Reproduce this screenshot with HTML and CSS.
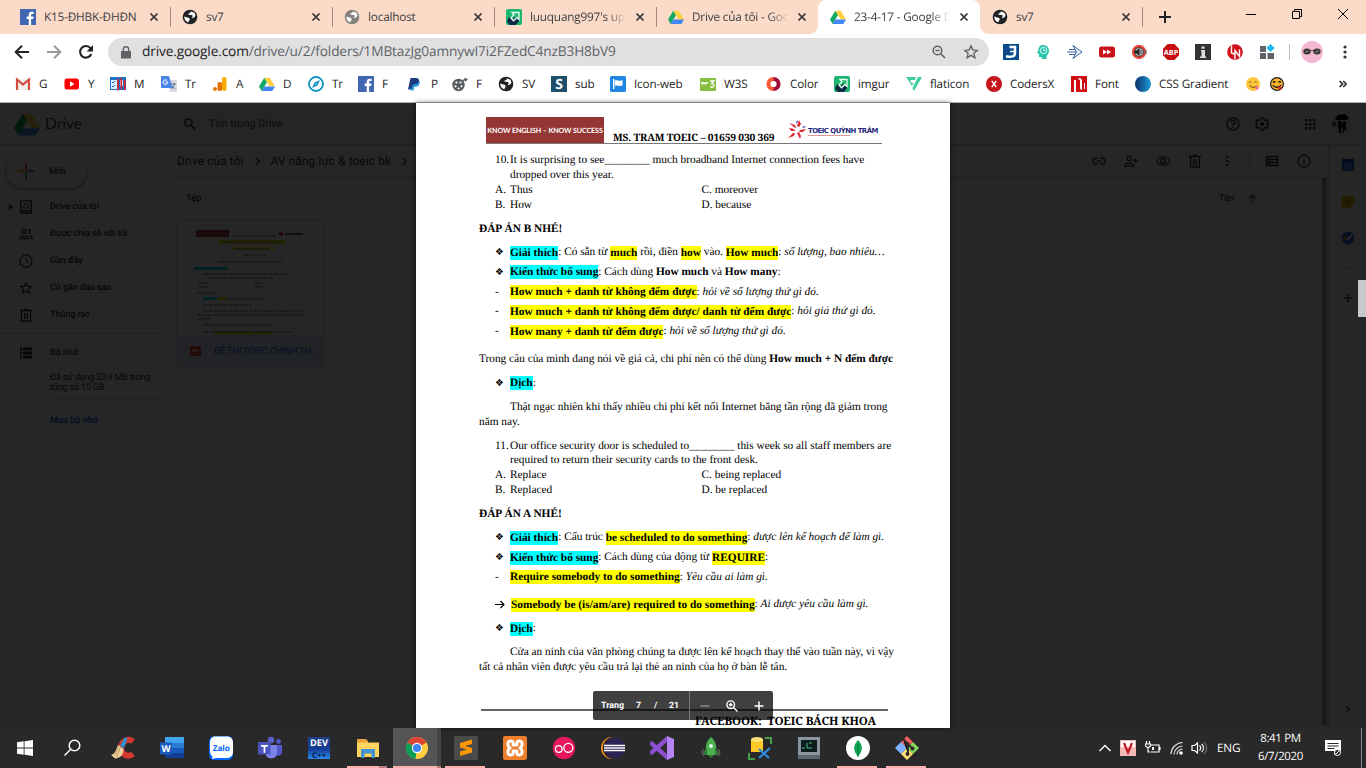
FILE: index.html
```html
<!DOCTYPE html>
<html lang="vi">
<head>
<meta charset="utf-8">
<title>23-4-17 - Google Drive</title>
<link rel="stylesheet" href="styles.css">
</head>
<body>
<svg class="defs" aria-hidden="true">
  <defs>
    <linearGradient id="gBlue"><stop offset="0" stop-color="#0b2f6b"/><stop offset="1" stop-color="#1d9fd8"/></linearGradient>
    <linearGradient id="gRing"><stop offset="0.45" stop-color="#ff5a36"/><stop offset="0.55" stop-color="#a3103c"/></linearGradient>
    <linearGradient id="gDev" x2="0" y2="1"><stop offset="0" stop-color="#1f3f86"/><stop offset="0.55" stop-color="#143c96"/><stop offset="1" stop-color="#2b8cf0"/></linearGradient>
  </defs>
  <symbol id="fb" viewBox="0 0 16 16"><path fill="#4267b2" d="M0 0h16v16H0z"/><path fill="#fff" d="M8.700 16V10H6.700V7.600h2V5.800c0-2 1.200-3.100 3-3.100h1.900v2.200h-1.300c-.9 0-1.200.5-1.200 1.200v1.500h2.400l-.3 2.400h-2.100v6z"/></symbol>
  <symbol id="globe" viewBox="0 0 16 16"><circle cx="8" cy="8" r="7.300" fill="currentColor"/><path fill="#fff" d="M8.500 2.300c1 .8-.4 1.800-1.600 2.100-1 .3-.7 1.300.2 1.400l2.600.1c1.300.2 1.300 1.700.4 2.200-.8.500.2 1.200 1 .7l1.400-.5 1-1.800-1-2.700zM2.200 7.500l3.200 1c1.200.3 2.300.7 2.300 1.700 0 1.200-1.200 1.200-1.200 2.300 0 .7.300 1.100.3 1.100-2.600-.7-4.600-3-4.600-6.100z"/></symbol>
  <symbol id="drive" viewBox="0 0 16 16"><path fill="#11a861" d="M5.300 1.700 0 10.600l2.700 4.400L8 6z"/><path fill="#ffcf3f" d="M5.300 1.700h5.400l5.300 8.900h-5.300z"/><path fill="#4285f4" d="M5.300 10.600H16L13.300 15H2.700z"/></symbol>
  <symbol id="imgur" viewBox="0 0 16 16"><rect width="16" height="16" rx="2" fill="#1bb76e"/><path fill="#0c2b43" d="M2 9.500 3.800 8l2.500 2.500L9 8l4 .5.500 3L10 16H4L1 13z"/><path fill="none" stroke="#e9fff3" stroke-width="1.300" d="M6 3.500h7v7l-2.200-2-3.200 3.200-2.700-2.800 3.100-3.200z"/></symbol>
  <symbol id="close" viewBox="0 0 10 10"><path fill="none" stroke="#303030" stroke-width="1.700" d="m1.500 1.500 7 7m0-7-7 7"/></symbol>
  <symbol id="trash" viewBox="0 0 14 14"><path fill="none" stroke="currentColor" stroke-width="1.300" d="M2.500 3v10h9V3M1 2.500h12M5 1.500h4M5.700 5v6M8.300 5v6"/></symbol>
  <symbol id="star" viewBox="0 0 16 16"><path fill="none" stroke="currentColor" stroke-width="1.400" d="m8 1.900 1.800 4 4.400.5-3.300 2.900 1 4.400L8 11.400l-3.900 2.300 1-4.400-3.300-2.900 4.400-.5z"/></symbol>
  <symbol id="chev" viewBox="0 0 8 10"><path fill="none" stroke="currentColor" stroke-width="1.400" d="m2 1 4 4-4 4"/></symbol>
</svg>

<header class="tabs">
  <div class="tab"><svg class="i16"><use href="#fb"/></svg><span class="tab-t">K15-ĐHBK-ĐHĐN</span><svg class="x"><use href="#close"/></svg></div>
  <div class="tab sep"><svg class="i16 dark"><use href="#globe"/></svg><span class="tab-t">sv7</span><svg class="x"><use href="#close"/></svg></div>
  <div class="tab sep"><svg class="i16 grey"><use href="#globe"/></svg><span class="tab-t">localhost</span><svg class="x"><use href="#close"/></svg></div>
  <div class="tab sep"><svg class="i16"><use href="#imgur"/></svg><span class="tab-t fade">luuquang997's uploads</span><svg class="x"><use href="#close"/></svg></div>
  <div class="tab sep"><svg class="i16"><use href="#drive"/></svg><span class="tab-t fade">Drive của tôi - Google</span><svg class="x"><use href="#close"/></svg></div>
  <div class="tab active"><svg class="i16"><use href="#drive"/></svg><span class="tab-t fade">23-4-17 - Google Drive</span><svg class="x"><use href="#close"/></svg></div>
  <div class="tab"><svg class="i16 dark"><use href="#globe"/></svg><span class="tab-t">sv7</span><svg class="x"><use href="#close"/></svg></div>
  <div class="newtab sep"><svg width="14" height="14" viewBox="0 0 14 14"><path stroke="#222" stroke-width="2" d="M7 1v12M1 7h12"/></svg></div>
  <div class="win">
    <svg width="12" height="12" viewBox="0 0 12 12"><path stroke="#000" d="M1 6.500h10"/></svg>
    <svg width="12" height="12" viewBox="0 0 12 12"><path fill="none" stroke="#000" d="M1.500 3.500h7v7h-7zM3.500 3V1.500h7v7H9"/></svg>
    <svg width="12" height="12" viewBox="0 0 12 12"><path stroke="#000" d="m1 1 10 10m0-10L1 11"/></svg>
  </div>
</header>

<div class="toolbar">
  <svg class="nav" viewBox="0 0 16 16"><path fill="none" stroke="#222" stroke-width="2" d="M15 8H2m6-6.300L1.700 8 8 14.300"/></svg>
  <svg class="nav" viewBox="0 0 16 16"><path fill="none" stroke="#9a9a9a" stroke-width="2" d="M1 8h13M8 1.700 14.300 8 8 14.300"/></svg>
  <svg class="nav" viewBox="0 0 16 16"><path fill="none" stroke="#222" stroke-width="2.100" d="M13.300 10A5.800 5.800 0 1 1 12.500 4.300"/><path fill="#222" d="M15 1v6.400H8.600z"/></svg>
  <div class="omni">
    <svg class="lock" width="10" height="13" viewBox="0 0 10 13"><path fill="#5f6368" d="M0 5h10v7.500H0z"/><path fill="none" stroke="#5f6368" stroke-width="1.400" d="M2.300 5V3.500a2.700 2.700 0 0 1 5.400 0V5"/></svg>
    <span class="url"><b>drive.google.com</b>/drive/u/2/folders/1MBtazJg0amnywI7i2FZedC4nzB3H8bV9</span>
    <svg class="i16" viewBox="0 0 16 16"><path fill="none" stroke="#5f6368" stroke-width="1.500" d="M10.800 6.500a4.300 4.300 0 1 1-8.600 0 4.300 4.300 0 0 1 8.600 0zM9.600 9.600l4.400 4.400M4.500 6.500h4"/></svg>
    <svg class="i16 gs"><use href="#star"/></svg>
  </div>
  <div class="exts">
    <svg class="i16" viewBox="0 0 16 16"><path fill="#0b4a8b" d="M0 0h16v16H0z"/><path fill="none" stroke="#fff" stroke-width="2.500" d="M6.500 3H12v6c0 3.500-3.500 4.500-9 3.200"/><path stroke="#fff" stroke-width="1.600" d="M7 7.500h5"/></svg>
    <svg class="i16" viewBox="0 0 16 16"><path fill="#2cc4ad" d="M8 1c4 0 6 3 6 5.800 0 3-1.700 4.200-2.400 5.200V15h-5v-2H4v-3L2 9l1.300-2.500C3.300 3 5.500 1 8 1z"/><circle cx="8.500" cy="6.500" r="3.200" fill="none" stroke="#d5fff6"/><path fill="none" stroke="#d5fff6" d="M8.500 4.700v2h1.700"/></svg>
    <svg class="i16" viewBox="0 0 16 16"><path fill="#eef5ff" stroke="#3a5f9b" d="M6 1.500 15 8l-9 6.500L9.500 8z"/><path stroke="#3a5f9b" d="M2 5.500h6M0 8h9M2 10.500h6"/></svg>
    <svg class="i16" viewBox="0 0 16 16"><rect y="2.500" width="16" height="11" rx="2.500" fill="#c9141b"/><path fill="#fff" d="m4 5.500 4 2.500-4 2.500zM8 5.500l4 2.500-4 2.500z"/></svg>
    <svg class="i16" viewBox="0 0 16 16"><circle cx="8" cy="8" r="6" fill="#333" stroke="#e6453c" stroke-width="2.300"/><circle cx="8" cy="8" r="4" fill="#aaa"/><path fill="#222" d="M4 6.500h2L8.500 4v8L6 9.500H4z"/><path stroke="#555" d="M10 6v4M12 7h4M12 9h4"/></svg>
    <svg class="i16" viewBox="0 0 16 16"><path fill="#c70d10" d="M4.700 0h6.600L16 4.700v6.600L11.300 16H4.700L0 11.300V4.700z"/><text x="8" y="10.800" font-size="7.200" font-weight="700" text-anchor="middle" fill="#fff">ABP</text></svg>
    <svg class="i16" viewBox="0 0 16 16"><path fill="#333" d="M0 0h16v16H0z"/><path fill="#ddd" d="M6.500 2.500h3v2.300h-3zM6 6h4v6.500h1V14H5v-1.500h1.500V7.500H6z"/></svg>
    <svg class="i16" viewBox="0 0 16 16"><circle cx="8" cy="8" r="7.800" fill="#d1121b"/><path fill="none" stroke="#fff" stroke-width="1.400" d="M4.500 1.500v7.500l4 1.500M8 15V6.500l4.500 6V5.500"/></svg>
    <svg class="i16" viewBox="0 0 16 16"><path fill="#5f6368" d="M1 2h6v6H1zM1 9h6v6H1zM8.500 9H15v6H8.500z"/><path fill="#16b7f3" d="m11.500 0 4 4-4 4-4-4z"/></svg>
  </div>
  <i class="tsep"></i>
  <svg class="avatar" viewBox="0 0 22 22"><circle cx="11" cy="11" r="11" fill="#f6b8d0"/><ellipse cx="6" cy="10.500" rx="3.700" ry="3" fill="#3a3a3a"/><ellipse cx="16" cy="10.500" rx="3.700" ry="3" fill="#3a3a3a"/><path stroke="#ccc" d="m5 11.500 2-2m8 2 2-2"/><path stroke="#555" d="M9 9.500h4"/></svg>
  <svg class="menu" width="4" height="14" viewBox="0 0 4 14"><circle cx="2" cy="2" r="1.600" fill="#333"/><circle cx="2" cy="7" r="1.600" fill="#333"/><circle cx="2" cy="12" r="1.600" fill="#333"/></svg>
</div>

<nav class="marks">
  <a><svg class="i16" viewBox="0 0 16 16"><path fill="#f1f1f1" d="M1 3h14v11H1z"/><path fill="none" stroke="#d54b3d" stroke-width="2.200" d="M2 14V3.500l6 5 6-5V14"/></svg>G</a>
  <a><svg class="i16" viewBox="0 0 16 16"><rect y="2.500" x=".5" width="14.500" height="11" rx="2.500" fill="#f00"/><path fill="#fff" d="m6 5.300 4.500 2.700L6 10.700z"/></svg>Y</a>
  <a><svg class="i16" viewBox="0 0 16 16"><path fill="#1c72c4" d="M0 1h16v13H0z"/><path fill="#dcefff" d="M1 4h6v9H1z"/><path fill="none" stroke="#1c72c4" d="m2 6 1 1 2-2m-3 5 1 1 2-2"/><path fill="#cfe4f7" d="M10 4h3v6h-3z"/><path fill="none" stroke="#ec1c24" stroke-width="1.500" d="M8 14.500V2.500M11.300 13V2M14.800 14V4"/></svg>M</a>
  <a><svg class="i16" viewBox="0 0 16 16"><path fill="#d7d9dc" d="M6 4h10v12H9z"/><path fill="#4a86e8" d="M0 0h8l3.500 12H0z"/><path fill="none" stroke="#fff" d="M6 4.500A2.300 2.300 0 1 0 6.700 6H4.500"/><path fill="none" stroke="#5f7c99" d="M10 8h5m-2.500-1v1m-2 5 3.500-5m-3 2 3 3"/></svg>Tr</a>
  <a><svg class="i16" viewBox="0 0 16 16"><rect x="10" y="1" width="4.500" height="14" rx="2" fill="#f9ab00"/><rect x="5.500" y="6" width="4.500" height="9" rx="2" fill="#e37400"/><circle cx="3" cy="13" r="2" fill="#e37400"/></svg>A</a>
  <a><svg class="i16"><use href="#drive"/></svg>D</a>
  <a><svg class="i16" viewBox="0 0 16 16"><circle cx="8" cy="8" r="7" fill="#fff" stroke="#1593c6" stroke-width="1.800"/><path fill="#1593c6" d="m12 4-2.500 5.500L4 12l2.500-5.500zM7.500 7.300l-.2 1.500 1.500-.3z"/></svg>Tr</a>
  <a><svg class="i16"><use href="#fb"/></svg>F</a>
  <a><svg class="i16" viewBox="0 0 16 16"><path fill="#1d3c82" d="M3.500 2h5.700c2 0 3.300 1.500 2.800 3.500-.5 2.500-2 3.500-4.200 3.500H6L5 13.500H1z"/><path fill="#1f9bdc" d="M12.200 5c1.500 1.200.3 5.800-3.600 5.800H7.200L6.500 14.500H4l1-4 1.500-2C10 8.500 11.800 7.300 12.200 5z"/></svg>P</a>
  <a><svg class="i16" viewBox="0 0 16 16"><circle cx="6.500" cy="9" r="6.200" fill="#575a60"/><g fill="#fff"><circle cx="4.500" cy="6.500" r="1.100"/><circle cx="8.500" cy="6.500" r="1.100"/><circle cx="3.500" cy="10.300" r="1.100"/><circle cx="9.500" cy="10.300" r="1.100"/><circle cx="6.500" cy="12.500" r="1"/></g><path stroke="#575a60" stroke-width="1.500" d="m11 5 3-3m-1 3 2.500-2"/></svg>F</a>
  <a><svg class="i16 dark"><use href="#globe"/></svg>SV</a>
  <a><svg class="i16" viewBox="0 0 16 16"><path fill="#1d4f68" d="M0 0h16v16H0z"/><text class="serif" x="8" y="13" font-size="14" font-weight="700" text-anchor="middle" fill="#fff">S</text></svg>sub</a>
  <a><svg class="i16" viewBox="0 0 16 16"><rect width="16" height="16" rx="1.500" fill="#2286e4"/><path fill="#fff" d="M3 3h1.500v10H3zM5 4.500c2-1 3.500 1 7.500-.2V9.500c-3.500 1.200-5-.8-7.500.2z"/></svg>Icon-web</a>
  <a><svg class="i16" viewBox="0 0 16 16"><path fill="#86bf3e" d="M0 2h16v13H0z"/><path fill="none" stroke="#fff" stroke-width="1.300" d="m1 6 1.500 2L4 6.500 5.500 8 7 6.500 8 7M10 5h4l-2.300 2.500c3 0 2.800 4-.2 3.800l-1.500-.8"/></svg>W3S</a>
  <a><svg class="i16" viewBox="0 0 16 16"><circle cx="7.500" cy="8" r="5.100" fill="none" stroke="url(#gRing)" stroke-width="4"/></svg>Color</a>
  <a><svg class="i16"><use href="#imgur"/></svg>imgur</a>
  <a><svg class="i16" viewBox="0 0 16 16"><path fill="#3ed09a" d="M0 1h10l-1 3H4l1.500 3h2L6 10zM12 1h4L8 15l-1.500-3z"/></svg>flaticon</a>
  <a><svg class="i16" viewBox="0 0 16 16"><circle cx="8" cy="8" r="8" fill="#c4161c"/><path stroke="#fff" stroke-width="1.500" d="m5.800 4.800 4.400 6.400m0-6.400-4.400 6.400"/></svg>CodersX</a>
  <a><svg class="i16" viewBox="0 0 16 16"><path fill="#d10d12" d="M0 0h16v16H0z"/><path fill="#fff" d="M3 4h2v12H3zM7.500 2C10 2 11 3 11 5v9c-1.500 0-2-1-2-3V5c0-1-.5-1.500-1.500-1.500zM13 7h1v6h-1z"/></svg>Font</a>
  <a><svg class="i16" viewBox="0 0 16 16"><circle cx="8" cy="8" r="8" fill="url(#gBlue)"/></svg>CSS Gradient</a>
  <a><svg class="i16" viewBox="0 0 16 16"><circle cx="7" cy="8" r="7" fill="#ffc93b"/><path fill="none" stroke="#6b4710" d="M3 6.500c.5-1 1.800-1 2.300 0M8.500 6.500c.5-1 1.800-1 2.300 0M3.500 9c1.500 3 5.500 3 7.500.5"/><path fill="#f26d9c" d="M9 11c1-2 4-1 3.500 1.500S9 13.500 9 11z"/></svg></a>
  <a><svg class="i16" viewBox="0 0 16 16"><circle cx="7" cy="8" r="6.400" fill="#ffb52b" stroke="#222" stroke-width="1.200"/><path fill="none" stroke="#111" stroke-width="1.300" d="M3 6.500c.5-1 1.800-1 2.300 0M8.500 6.500c.5-1 1.800-1 2.300 0M3 9c1.500 3 6 3 8 0"/><path fill="#e62d2d" d="M8 11.500c1-2 4-1 3.500 1S8 14 8 11.500z"/></svg></a>
  <a class="more"><svg width="8" height="8" viewBox="0 0 8 8"><path fill="none" stroke="#222" stroke-width="1.600" d="m.6 1 3 3-3 3M4.200 1l3 3-3 3"/></svg></a>
</nav>

<main class="stage">
  <div class="drive">
    <div class="d-head">
      <svg class="d-logo"><use href="#drive"/></svg><span class="d-name">Drive</span>
      <div class="search"><svg width="12" height="12" viewBox="0 0 12 12"><path fill="none" stroke="#333" stroke-width="1.500" d="M8 4.500a3.600 3.600 0 1 1-7.200 0 3.600 3.600 0 0 1 7.200 0zM7 7l4.300 4.300"/></svg><span>Tìm trong Drive</span></div>
      <div class="d-icons">
        <svg class="i14" viewBox="0 0 14 14"><circle cx="7" cy="7" r="6" fill="none" stroke="#333" stroke-width="1.300"/><path fill="none" stroke="#333" stroke-width="1.300" d="M5 5.500c0-3 4-2.500 4-.3C9 6.500 7 6.700 7 8.300M7 9.500v1.300"/></svg>
        <svg class="i14" viewBox="0 0 14 14"><path fill="none" stroke="#333" stroke-width="1.400" d="M5.500 1h3l.4 1.700 1.300.7 1.700-.5 1.300 2.400L12 6.500v1l1.200 1.200-1.300 2.400-1.700-.5-1.300.7L8.500 13h-3l-.4-1.700-1.300-.7-1.700.5L.8 8.700 2 7.500v-1L.8 5.300l1.300-2.400 1.700.5 1.300-.7z"/><circle cx="7" cy="7" r="2" fill="#222"/></svg>
        <svg class="i14" viewBox="0 0 14 14"><path fill="#333" d="M2 2h2.500v2.500H2zM6 2h2.500v2.500H6zM10 2h2.500v2.500H10zM2 6h2.500v2.500H2zM6 6h2.500v2.500H6zM10 6h2.500v2.500H10zM2 10h2.500v2.500H2zM6 10h2.500v2.500H6zM10 10h2.500v2.500H10z"/></svg>
        <svg class="d-av" viewBox="0 0 20 20"><circle cx="10" cy="10" r="10" fill="#e4e4e4"/><path fill="#000" d="m3 5 3-4 7-1 4 4-3 2H5zM6 7h3l1 3 2-3 2 1v8h-2v3h-1v-7l-2 4v3H7v-3L6 12z"/><path fill="#3b6b5a" d="M0 8h4v4H0z"/></svg>
      </div>
    </div>
    <aside class="side">
      <div class="new"><svg width="16" height="16" viewBox="0 0 16 16"><path fill="#ea4335" d="M7 0h2v7H7z"/><path fill="#fbbc04" d="M0 7h7v2H0z"/><path fill="#34a853" d="M7 9h2v7H7z"/><path fill="#4285f4" d="M9 7h7v2H9z"/></svg>Mới</div>
      <div class="it first"><svg class="i14" viewBox="0 0 14 14"><path fill="none" stroke="#444" stroke-width="1.500" d="M1.700 1h10.600v12H1.700zM1.700 11h10.600"/><path fill="none" stroke="#444" d="M6 3.500h2L10 8H4z"/></svg>Drive của tôi</div>
      <div class="it"><svg class="i14" viewBox="0 0 14 14"><path fill="none" stroke="#444" stroke-width="1.400" d="M7 4.500a2 2 0 1 1-4 0 2 2 0 0 1 4 0zM1 11.500c0-3.500 8.500-3.500 8.500 0zM9 2.500a2 2 0 0 1 0 4M10.500 8.500c2 .5 2.700 1.500 2.700 3H11"/></svg>Được chia sẻ với tôi</div>
      <div class="it"><svg class="i14" viewBox="0 0 14 14"><circle cx="7" cy="7" r="6" fill="none" stroke="#444" stroke-width="1.400"/><path fill="none" stroke="#444" stroke-width="1.200" d="M7 3.500V7l2.500 1.800"/></svg>Gần đây</div>
      <div class="it"><svg class="i14"><use href="#star"/></svg>Có gắn dấu sao</div>
      <div class="it"><svg class="i14"><use href="#trash"/></svg>Thùng rác</div>
      <div class="it mem"><svg class="i14" viewBox="0 0 14 14"><path fill="#333" d="M1 1.500h2v3H1zM4 1.500h9v3H4zM1 5.500h2v3H1zM4 5.500h9v3H4zM1 9.500h2v3H1zM4 9.500h9v3H4z"/></svg>Bộ nhớ</div>
      <p class="used">Đã sử dụng 23,9 MB trong<br>tổng số 15 GB</p>
      <p class="buy">Mua bộ nhớ</p>
    </aside>
    <section class="files">
      <div class="crumbs"><span>Drive của tôi</span><svg class="cv"><use href="#chev"/></svg><span>AV năng lực &amp; toeic bk</span><svg class="cv"><use href="#chev"/></svg>
        <div class="acts">
          <svg class="i14" viewBox="0 0 14 14"><path fill="none" stroke="#444" stroke-width="1.400" d="M6 4H4a3 3 0 0 0 0 6h2M8 4h2a3 3 0 0 1 0 6H8M4.500 7h5"/></svg>
          <svg class="i14" viewBox="0 0 14 14"><path fill="none" stroke="#444" stroke-width="1.400" d="M7.500 4.500a2.200 2.200 0 1 1-4.400 0 2.200 2.200 0 0 1 4.400 0zM.8 12c0-4 9-4 9 0zM11.500 4v5M9 6.500h5"/></svg>
          <svg class="i14" viewBox="0 0 14 14"><path fill="none" stroke="#444" stroke-width="1.400" d="M.5 7C3 1.500 11 1.500 13.500 7 11 12.500 3 12.500.5 7z"/><circle cx="7" cy="7" r="2.200" fill="none" stroke="#444" stroke-width="1.400"/></svg>
          <svg class="i14"><use href="#trash"/></svg>
          <svg class="i14" viewBox="0 0 14 14"><path fill="#444" d="M6 2h2.300v2H6zM6 6h2.300v2H6zM6 10h2.300v2H6z"/></svg>
          <i class="asep"></i>
          <svg class="i14" viewBox="0 0 14 14"><path fill="none" stroke="#333" stroke-width="1.400" d="M1.500 2.500h11v9h-11zM4.500 2.500v9M1.500 5.500h11M1.500 8.500h11"/></svg>
          <svg class="i14" viewBox="0 0 14 14"><circle cx="7" cy="7" r="6" fill="none" stroke="#444" stroke-width="1.300"/><path stroke="#444" stroke-width="1.300" d="M7 3.500v1.300M7 6v4.500"/></svg>
        </div>
      </div>
      <div class="list">
        <div class="l-head"><span>Tệp</span><span class="sort">Tên <svg width="9" height="9" viewBox="0 0 9 9"><path fill="none" stroke="#555" stroke-width="1.300" d="M4.500 9V1M1 4.500 4.500 1 8 4.500"/></svg></span></div>
        <div class="card">
          <svg class="thumb" viewBox="0 0 146 115">
            <path fill="#b04040" d="M19 10h33v7H19z"/><path fill="#ee0" d="M42 20h66v4H42zM54 27h43v3H54zM37 111h41v4H37zM79 111h15v4H79zM41 77h8v3h-8z"/><path fill="#0dd" d="M17 47h34v3H17zM26 77h14v3H26z"/>
            <path stroke="#999" stroke-width="1.500" stroke-dasharray="5 1 3 1" d="M55 16h44M46 22h58M58 29h36M66 35h23M26 54h86M31 58h66M22 63h12M78 63h8M22 67h8M78 67h8M20 73h20M51 79h35M26 85h48M26 91h102M20 95h108M20 99h13M26 105h72M26 112h90"/>
            <path stroke="#d22" stroke-width="3" d="M102 14h4"/><path stroke="#336" stroke-width="1.500" d="M108 14h18"/><path stroke="#888" d="M42 42h64"/>
          </svg>
          <div class="c-name"><span class="pdf">PDF</span><span>ĐỀ THI TOEIC CHINH TH...</span></div>
        </div>
      </div>
    </section>
    <aside class="apps">
      <svg class="i14" viewBox="0 0 14 14"><path fill="#2a6de0" d="M1 1h12v12H1z"/><path fill="#1a4fb0" d="M1 1h12v3H1z"/><text x="7" y="11" font-size="7" text-anchor="middle" fill="#cfe0ff">31</text></svg>
      <svg class="i14" viewBox="0 0 14 14"><path fill="#fbbc04" d="M1 1h12v8l-4 4H1z"/><circle cx="7" cy="6" r="2.300" fill="none" stroke="#a67c00"/><path fill="#a67c00" d="M6 9h2v2H6z"/></svg>
      <svg class="i14" viewBox="0 0 14 14"><circle cx="7" cy="7" r="6.500" fill="#2a6de0"/><path stroke="#fff" stroke-width="2" d="m6 9 5-5"/><circle cx="3.800" cy="7" r="1.500" fill="#fbbc04"/></svg>
      <i></i>
      <svg class="i14" viewBox="0 0 14 14"><path stroke="#444" stroke-width="1.500" d="M7 3v8M3 7h8"/></svg>
      <svg class="a-end"><use href="#chev"/></svg>
    </aside>
  </div>
  <div class="shade"></div>
  <i class="thumbbar"></i>

  <article class="page">
    <div class="letter">
      <span class="slogan">KNOW ENGLISH – KNOW SUCCESS</span>
      <span class="teacher">MS. TRAM TOEIC – 01659 030 369</span>
      <svg width="20" height="20" viewBox="0 0 20 20"><path fill="#e02a35" d="m8 8-6-5 6 2 1 3zM10 6l2-6 2 4-2 3zM13 10l6-1-3 3-4 0zM7 9 2 8l2 3 4 0zM6 13l-5 5 6-2 1-3zM10 13l3 6 1-3-2-4z"/><path fill="#2b2b86" d="M9 2l2-2-1 4zM17 6l2 1-4 1z"/></svg>
      <span class="brand"><b>TOEIC QUỲNH TRÂM</b><i></i></span>
    </div>
    <div class="doc">
      <p class="q"><span>10.</span>It is surprising to see________ much broadband Internet connection fees have</p>
      <p class="in">dropped over this year.</p>
      <p class="opt"><span>A.</span><span>Thus</span><span>C. moreover</span></p>
      <p class="opt"><span>B.</span><span>How</span><span>D. because</span></p>
      <p class="ans"><b>ĐÁP ÁN B NHÉ!</b></p>
      <p class="q"><span class="d">❖</span><b class="c">Giải thích</b>: Có sẵn từ <b class="y">much</b> rồi, điền <b class="y">how</b> vào. <b class="y">How much</b>: <em>số lượng, bao nhiêu…</em></p>
      <p class="q"><span class="d">❖</span><b class="c">Kiến thức bổ sung</b>: Cách dùng <b>How much</b> và <b>How many</b>:</p>
      <p class="q"><span>-</span><b class="y">How much + danh từ không đếm được</b>: <em>hỏi về số lượng thứ gì đó.</em></p>
      <p class="q"><span>-</span><b class="y">How much + danh từ không đếm được/ danh từ đếm được</b>: <em>hỏi giá thứ gì đó.</em></p>
      <p class="q"><span>-</span><b class="y">How many + danh từ đếm được</b>: <em>hỏi về số lượng thứ gì đó.</em></p>
      <p>Trong câu của mình đang nói về giá cả, chi phí nên có thể dùng <b>How much + N đếm được</b></p>
      <p class="q"><span class="d">❖</span><b class="c">Dịch</b>:</p>
      <p class="in">Thật ngạc nhiên khi thấy nhiều chi phí kết nối Internet băng tần rộng đã giảm trong</p>
      <p>năm nay.</p>
      <p class="q"><span>11.</span>Our office security door is scheduled to________ this week so all staff members are</p>
      <p class="in">required to return their security cards to the front desk.</p>
      <p class="opt"><span>A.</span><span>Replace</span><span>C. being replaced</span></p>
      <p class="opt"><span>B.</span><span>Replaced</span><span>D. be replaced</span></p>
      <p class="ans"><b>ĐÁP ÁN A NHÉ!</b></p>
      <p class="q"><span class="d">❖</span><b class="c">Giải thích</b>: Cấu trúc <b class="y">be scheduled to do something</b>: <em>được lên kế hoạch để làm gì.</em></p>
      <p class="q"><span class="d">❖</span><b class="c">Kiến thức bổ sung</b>: Cách dùng của động từ <b class="y">REQUIRE</b>:</p>
      <p class="q"><span>-</span><b class="y">Require somebody to do something</b>: <em>Yêu cầu ai làm gì.</em></p>
      <p class="q arrow"><span><svg width="10" height="9" viewBox="0 0 10 9"><path fill="none" stroke="#000" stroke-width="1.200" d="M0 4.500h9M5.500 1 9 4.500 5.500 8"/></svg></span><b class="y">Somebody be (is/am/are) required to do something</b>: <em>Ai được yêu cầu làm gì.</em></p>
      <p class="q"><span class="d">❖</span><b class="c">Dịch</b>:</p>
      <p class="in">Cửa an ninh của văn phòng chúng ta được lên kế hoạch thay thế vào tuần này, vì vậy</p>
      <p>tất cả nhân viên được yêu cầu trả lại thẻ an ninh của họ ở bàn lễ tân.</p>
    </div>
    <div class="foot">FACEBOOK:&nbsp; TOEIC BÁCH KHOA</div>
  </article>

  <div class="pager">
    <span>Trang</span><span>7</span><span>/</span><span>21</span>
    <div class="zoomers">
      <svg width="10" height="10" viewBox="0 0 10 10"><path stroke="#aaa" stroke-width="1.200" d="M.5 5h9"/></svg>
      <svg width="12" height="12" viewBox="0 0 12 12"><path fill="none" stroke="#fff" stroke-width="1.400" d="M8.500 4.700a3.800 3.800 0 1 1-7.600 0 3.800 3.800 0 0 1 7.600 0zM7.500 7.500l4 4M2.800 4.700h3.800M4.700 2.800v3.800"/></svg>
      <svg width="10" height="10" viewBox="0 0 10 10"><path stroke="#fff" stroke-width="1.500" d="M.5 5h9M5 .5v9"/></svg>
    </div>
  </div>
</main>

<footer class="task">
  <div class="pins">
    <div><svg viewBox="0 0 24 24"><path fill="#fff" d="M4 6.200 10.700 5.300v6.300H4zM11.500 5.200 20 4v7.600h-8.500zM4 12.400h6.700v6.300L4 17.800zM11.500 12.400H20V20l-8.500-1.200z"/></svg></div>
    <div><svg viewBox="0 0 24 24"><circle cx="12.500" cy="9.500" r="5.300" fill="none" stroke="#fff" stroke-width="1.500"/><path stroke="#fff" stroke-width="1.500" d="m8.500 13.500-6 6"/></svg></div>
    <div><svg viewBox="0 0 24 24"><path fill="none" stroke="#d5382f" stroke-width="6" d="M22 5.500c-5-4-12 0-12 6.500s7 10 12 6"/><path fill="#2f8fd0" d="m14 1 2.500 1.500L13 12l-4-2z"/><path fill="#efd3a0" d="m7 9 5.500 4c0 6-3.500 9.500-8.500 9.500L0 19c4-1 5-5 7-10z"/><path stroke="#c19a5b" d="m9.500 11-4 10M7 11l-3.500 9"/></svg></div>
    <div><svg viewBox="0 0 24 24"><path fill="#41a5ee" d="M5 1h19v6H5z"/><path fill="#2b7cd3" d="M5 7h19v5H5z"/><path fill="#185abd" d="M5 12h19v5H5z"/><path fill="#103f91" d="M5 17h19v5H5z"/><path fill="#185abd" d="M0 6.500h12v12H0z"/><text x="6" y="16" font-size="9.500" font-weight="700" text-anchor="middle" fill="#fff">W</text></svg></div>
    <div><svg viewBox="0 0 24 24"><path fill="#0068ff" d="M6 0h12q6 0 6 6v12q0 6-6 6H6q-6 0-6-6V6q0-6 6-6z"/><path fill="#fff" d="M6 .5h12C22 .5 24 3 24 7v9c0 4-3 6-7 6H7l-4 1 .5-2.500C1 18.500 1 16 1 13V7C1 3 3 .5 6 .5z"/><text x="12.300" y="14.500" font-size="8.200" font-weight="700" text-anchor="middle" fill="#0068ff">Zalo</text></svg></div>
    <div><svg viewBox="0 0 24 24"><circle cx="13" cy="4" r="3.300" fill="#5e62c6"/><circle cx="20.500" cy="5.500" r="2.400" fill="#5059c9"/><path fill="#5059c9" d="M17 9h7v7c0 3-3 4.500-6 3.500z"/><path fill="#7b83eb" d="M7 9h12v8c0 7-11 7.500-12 0z"/><path fill="#4b53bc" d="M0 6h12.500v12.500H0z"/><path fill="#fff" d="M3 9h7v1.700H7.300v6h-1.700v-6H3z"/></svg></div>
    <div><svg viewBox="0 0 24 24"><path fill="url(#gDev)" d="M1 1h22v22H1z"/><text x="12" y="9.800" font-size="9.200" font-weight="700" text-anchor="middle" fill="#fff">DEV</text><text x="12" y="21.800" font-size="8" font-weight="700" text-anchor="middle" fill="#061c48">C++</text></svg></div>
    <div class="run r2"><svg viewBox="0 0 24 24"><path fill="#e8a33d" d="M1 3h9l2 2v3H1z"/><path fill="#fcd462" d="M1 6.500h22V21H1z"/><path fill="#3f94d1" d="M5 13h14v9h-3.500v-4.500h-7V22H5z"/></svg></div>
    <div class="run now"><svg viewBox="0 0 24 24"><circle cx="12" cy="12" r="11" fill="#ffcd40"/><path fill="#db4437" d="M12 12 2.500 6.500C6-.5 17-1 21.500 6.500z"/><path fill="#0f9d58" d="m12 12-1.500 11C2 22 -1.500 13 2.500 6.500z"/><circle cx="12" cy="12" r="5.200" fill="#fff"/><circle cx="12" cy="12" r="4.100" fill="#4285f4"/></svg></div>
    <div class="run"><svg viewBox="0 0 24 24"><rect width="24" height="24" rx="1" fill="#4a4a4a"/><path fill="#ff9800" d="m6 7 12-3.500V8l-7 2 7 2v4.500L6 20v-4.500l7-2-7-2z"/></svg></div>
    <div><svg viewBox="0 0 24 24"><rect width="24" height="24" rx="2" fill="#ec7f2b"/><path fill="none" stroke="#fff" stroke-width="3" stroke-linejoin="round" d="M8 5c-4 0-4 5-1 7-3 2-3 7 1 7 3 0 2-3 2-4h4c0 1-1 4 2 4 4 0 4-5 1-7 3-2 3-7-1-7-3 0-2 3-2 4h-4c0-1 1-4-2-4z"/></svg></div>
    <div><svg viewBox="0 0 24 24"><circle cx="12" cy="12" r="11.200" fill="#e6175c"/><circle cx="6.800" cy="13" r="3.300" fill="none" stroke="#fff" stroke-width="1.300"/><circle cx="16.300" cy="11.800" r="4.500" fill="none" stroke="#fff" stroke-width="1.300"/></svg></div>
    <div><svg viewBox="0 0 24 24"><circle cx="11" cy="12" r="11" fill="#f7941e"/><circle cx="12.700" cy="12" r="11" fill="#292929"/><circle cx="13.500" cy="12" r="10.300" fill="#2c2255"/><path stroke="#fff" stroke-width="1.600" d="M3 9.500h21M3 12h21M3 14.500h21"/></svg></div>
    <div><svg viewBox="0 0 24 24"><path fill="#8b4fd0" d="M17 0v24L0 9V6l2-1 15 13V6L2 19l-2-1v-3z"/><path fill="#b683f2" d="m17 0 7 3v18l-7 3z"/></svg></div>
    <div><svg viewBox="0 0 24 24"><path fill="#4caf50" d="M12 1c6 5 6 12 4 18H8C6 13 6 6 12 1z"/><path fill="#327a3a" d="m8 12-4 4 1 3h3zM16 12l4 4-1 3h-3zM9 19h6l-3 3z"/><path fill="none" stroke="#8a7b6c" d="M5 13c-3 2-2 5 0 7M19 13c3 2 2 5 0 7"/><circle cx="12" cy="10" r="2" fill="#e3f6e8"/></svg></div>
    <div><svg viewBox="0 0 24 24"><path fill="#ffca28" d="M3 3h12v13H3z"/><ellipse cx="9" cy="3.500" rx="6" ry="2.500" fill="#ffe07a"/><path fill="none" stroke="#43a047" stroke-width="2" d="M17 2h6v6M1 17v6h6"/><path stroke="#2c8ae0" stroke-width="2.300" d="m11 13 10 9m1-10L11 22"/></svg></div>
    <div><svg viewBox="0 0 24 24"><path fill="#8996a0" d="M1 1h22v18H1z"/><path fill="#5a6670" d="M1 19h22v4H1z"/><path fill="#0d1d1d" d="M4 4h16v12H4z"/><path fill="none" stroke="#43bf78" d="M10 7v5h5M12 7h3M5 12h3"/></svg></div>
    <div class="run"><svg viewBox="0 0 24 24"><circle cx="12" cy="12" r="12" fill="#fff"/><path fill="#13a354" d="M12 4c5 5 5 11 .5 16h-1C7 15 7 9 12 4z"/><path stroke="#0b7b3c" d="M12 8v13"/></svg></div>
    <div class="run"><svg viewBox="0 0 24 24"><path fill="#f15d5d" d="m12 0 6 6-6 6-6-6z"/><path fill="#80b3ff" d="m6 6 6 6-6 6-6-6z"/><path fill="#87d65b" d="m18 6 6 6-6 6-6-6z"/><path fill="#ffe173" d="m12 12 6 6-6 6-6-6z"/><path stroke="#292929" stroke-width="1.800" d="m8 3 5 5v10M13 8l5 5"/><g fill="#292929"><circle cx="12.500" cy="8" r="2"/><circle cx="17.500" cy="12.500" r="2"/><circle cx="12.500" cy="18" r="2"/></g></svg></div>
  </div>
  <div class="tray">
    <svg width="12" height="8" viewBox="0 0 12 8"><path fill="none" stroke="#fff" stroke-width="1.400" d="m.5 7 5.500-5.500L11.500 7"/></svg>
    <svg class="i16" viewBox="0 0 16 16"><path fill="#f3b9b9" d="M0 0h16v16H0z"/><path fill="#fff" d="M1 1h14v6H1z"/><path fill="none" stroke="#c5161d" stroke-width="2.200" d="m4 3 4 9.500L12 3"/></svg>
    <svg class="i16" viewBox="0 0 16 16"><path fill="none" stroke="#fff" stroke-width="1.200" d="M6 5h8v7H5.500M15 7v3M1.500 1v3m3-3v3M.5 4h5v2L3 8 .5 6zM3 8v4h2"/><path fill="#fff" d="M7 7h2v3H7z"/></svg>
    <svg class="i16" viewBox="0 0 16 16"><path fill="none" stroke="#ddd" stroke-width="1.200" d="M2 14A12 12 0 0 1 13.500 2.500M5 14.500A9 9 0 0 1 13.500 6M8 14.500A6 6 0 0 1 13.500 9"/><circle cx="12" cy="13" r="1.800" fill="#fff"/></svg>
    <svg class="i16" viewBox="0 0 16 16"><path fill="none" stroke="#fff" stroke-width="1.200" d="M1 5.500h2.500L6.500 3v10L3.500 10.500H1zM8.500 5.500c1.500 1.500 1.500 3.500 0 5M10.700 3.800c2.300 2.500 2.300 6 0 8.400"/><path fill="none" stroke="#888" d="M13 2c3.300 3.500 3.300 8.500 0 12"/></svg>
    <span class="lang">ENG</span>
    <span class="clock">8:41 PM<br>6/7/2020</span>
    <svg class="i16" viewBox="0 0 16 16"><path fill="#fff" d="M0 0h16v11h-3L9 15v-4H0z"/><path stroke="#292929" stroke-width="1.200" d="M2.500 3.500h11M2.500 6h11M2.500 8.500h7"/><circle cx="12.500" cy="12.500" r="3" fill="#292929" stroke="#fff"/><path stroke="#fff" d="m10.500 14.500 4-4"/></svg>
    <i class="edge"></i>
  </div>
</footer>
</body>
</html>
```
FILE: styles.css
```css
* { box-sizing: border-box; }
html, body { margin: 0; width: 1366px; height: 768px; overflow: hidden; }
body {
  display: flex; flex-direction: column; background: #fff; color: #222;
  font-family: "Open Sans", "Noto Sans", sans-serif; font-size: 12px;
  text-rendering: geometricPrecision;
}
svg { display: block; flex: none; }
p { margin: 0; }
.defs { position: absolute; width: 0; height: 0; }
.i16 { width: 16px; height: 16px; }
.i14 { width: 14px; height: 14px; }
.dark { color: #202124; }
.grey { color: #85817e; }

/* tab strip */
.tabs { height: 34px; flex: none; background: #fcdac8; display: flex; padding-left: 8px; }
.tab { position: relative; width: 162px; flex: none; height: 34px; display: flex; align-items: center; padding: 0 10px 0 12px; }
.tab-t { width: 98px; margin: -1px 0 0 8px; white-space: nowrap; overflow: hidden; font-size: 11.800px; letter-spacing: -.2px; color: #3c4043; }
.fade { -webkit-mask-image: linear-gradient(90deg, #000 78%, transparent 98%); mask-image: linear-gradient(90deg, #000 78%, transparent 98%); }
.x { width: 10px; height: 10px; margin-left: 7px; }
.sep::before { content: ""; position: absolute; left: 0; top: 7px; width: 1px; height: 20px; background: #a08a80; }
.active { background: #fff; border-radius: 8px 8px 0 0; }
.active::before, .active::after { content: ""; position: absolute; bottom: 0; width: 8px; height: 8px; }
.active::before { left: -8px; background: radial-gradient(circle at 0 0, transparent 7.5px, #fff 8px); }
.active::after { right: -8px; background: radial-gradient(circle at 100% 0, transparent 7.5px, #fff 8px); }
.newtab { position: relative; padding: 10px 0 0 16px; width: 60px; }
.win { margin-left: auto; display: flex; gap: 34px; padding: 8px 17px 0 0; }

/* address row */
.toolbar { height: 36px; flex: none; display: flex; align-items: center; padding-left: 14px; }
.nav { width: 16px; height: 16px; margin-right: 16px; }
.omni { width: 881px; height: 28px; margin-left: -2px; border-radius: 14px; background: #e0e0e0; display: flex; align-items: center; padding-left: 13px; }
.url { margin: 0 0 1px 11px; width: 789px; white-space: nowrap; font-size: 13.700px; letter-spacing: -.15px; color: #5f6368; }
.url b { font-weight: 400; color: #202124; }
.gs { margin-left: 16px; color: #5f6368; }
.exts { display: flex; gap: 16px; margin-left: 14px; }
.tsep { width: 1px; height: 16px; background: #bbb; margin-left: 14px; }
.avatar { width: 22px; height: 22px; margin-left: 11px; }
.menu { margin-left: 20px; }

/* bookmarks */
.marks {
  height: 33px; flex: none; border-bottom: 1px solid #b3b1b1; padding: 0 0 5px 15px; display: grid; align-items: center;
  grid-template-columns: 49px 46px 51px 51px 47px 49px 50px 49px 45px 46px 53px 59px 90px 66px 68px 72px 80px 85px 64px 111px 24px 69px 12px;
}
.marks a { display: flex; align-items: center; gap: 8px; white-space: nowrap; font-size: 11.700px; letter-spacing: -.14px; color: #222; }

/* drive behind the viewer */
.stage { position: relative; height: 625px; flex: none; background: #fff; }
.drive {
  height: 625px; display: grid; grid-template: 42px 583px / 171px 1157px 38px;
  font-family: Roboto, sans-serif; font-size: 9.300px; color: #333;
}
.d-head { grid-column: 1 / 4; border-bottom: 1px solid #ccc; display: flex; align-items: center; padding-left: 14px; }
.d-logo { width: 26px; height: 26px; }
.d-name { width: 131px; padding-left: 5px; font: 15.500px Lato, sans-serif; color: #444; }
.search { width: 480px; height: 32px; background: #f1f3f4; border-radius: 5px; display: flex; align-items: center; padding-left: 13px; gap: 13px; font-size: 10.800px; color: #555; }
.d-icons { margin-left: auto; display: flex; align-items: center; padding-right: 14px; gap: 15px; }
.d-icons svg:nth-child(3) { margin-left: 19px; }
.d-av { width: 20px; height: 20px; }
.side { padding-top: 9px; }
.new { width: 81px; height: 34px; margin-left: 6px; border-radius: 17px; box-shadow: 0 1px 3px #777; display: flex; align-items: center; gap: 15px; padding-left: 12px; font-size: 9.600px; font-weight: 500; margin-bottom: 5px; }
.it { position: relative; height: 27px; display: flex; align-items: center; gap: 17px; padding: 1px 0 0 19px; color: #333; font-size: 9.100px; font-weight: 500; letter-spacing: -.12px; }
.first::before { content: ""; position: absolute; left: 9px; top: 11px; border: 3px solid transparent; border-left: 4px solid #333; }
.mem { width: 160px; margin-top: 5px; border-top: 1px solid #ccc; height: 38px; }
.used { width: 110px; margin: 2px 0 0 50px; font-size: 9.300px; line-height: 10px; border-bottom: 2px solid #ddd; padding-bottom: 4px; white-space: nowrap; letter-spacing: -.3px; }
.buy { margin: 16px 0 0 50px; color: #1a55e8; font-weight: 500; letter-spacing: -.1px; }
.crumbs { height: 33px; border-bottom: 1px solid #ccc; display: flex; align-items: center; padding-left: 6px; font-size: 11.900px; color: #333; letter-spacing: .1px; }
.cv { width: 7px; height: 9px; margin: 0 10px; }
.acts { margin-left: auto; display: flex; align-items: center; gap: 18px; padding-right: 17px; }
.asep { width: 1px; height: 20px; background: #ccc; margin: 0 -3px; }
.list { height: 547px; width: 1156px; border-right: 5px solid #aaa; }
.l-head { display: flex; justify-content: space-between; height: 41px; align-items: center; padding: 0 65px 0 15px; font-weight: 500; }
.sort { display: flex; gap: 14px; align-items: center; font-size: 9px; }
.card { width: 148px; height: 148px; margin-left: 5px; border: 1px solid #ccc; border-radius: 4px; overflow: hidden; }
.thumb { width: 146px; height: 115px; }
.c-name { height: 32px; background: #dfeaff; display: flex; align-items: center; gap: 13px; padding-left: 13px; color: #1a62e8; white-space: nowrap; font-size: 9.400px; letter-spacing: -.25px; }
.pdf { width: 11px; height: 10px; background: #ea4335; color: #fff; font-size: 4px; font-weight: 700; line-height: 10px; text-align: center; border-radius: 1px; letter-spacing: 0; }
.apps { border-left: 1px solid #ccc; display: flex; flex-direction: column; align-items: center; gap: 22.500px; padding-top: 13px; }
.apps i { width: 14px; height: 1px; background: #bbb; }
.a-end { width: 6px; height: 8px; margin-top: 377px; }
.shade { position: absolute; inset: 0; background: rgba(0, 0, 0, .85); }
.thumbbar { position: absolute; right: 0; top: 177px; width: 8px; height: 37px; background: #c8c8c8; }

/* document page */
.page {
  position: absolute; left: 416px; top: 0; width: 534px; height: 625px; overflow: hidden; background: #fff; color: #000;
  font-family: "Liberation Serif", serif; font-size: 11.340px; box-shadow: 0 0 5px rgba(0, 0, 0, .6);
}
.letter { margin: 14px 0 0 70px; width: 396px; height: 27px; display: flex; border-bottom: 1px solid #777; white-space: nowrap; }
.slogan { width: 118px; flex: none; height: 26px; background: #943634; color: #fff; font: 700 7.150px/27px Lato, sans-serif; text-align: center; letter-spacing: -.12px; }
.teacher { width: 162px; flex: none; margin: 12px 0 0 9px; font: 700 10.200px/16px "Noto Serif", "DejaVu Serif Condensed", "DejaVu Serif", serif; letter-spacing: -.16px; }
.letter svg { margin: 3px 0 0 12px; }
.brand { margin: 10px 0 0 1px; width: 70px; }
.brand b { display: block; font: 700 6.900px/8px "DejaVu Sans", sans-serif; color: #27277c; letter-spacing: -.5px; }
.brand i { display: block; width: 42px; height: 1px; background: #d99; }
.doc {
  margin: 9px 0 0 63px; display: grid; white-space: nowrap; line-height: 15px;
  grid-template-rows: 15px 15px 15px 24px 23px 19.500px 20px 19.500px 20px 28px 23.500px 24px 15px 24px 14.500px 15px 15px 23.500px 23.500px 20px 19.500px 27.500px 24px 24px 15px 15px;
}
.doc p { height: 15px; }
.q { display: flex; white-space: pre; padding-left: 16px; }
.q > span { width: 15px; flex: none; }
.q > .d { font-size: 9.800px; }
.arrow > span { padding-top: 3px; width: 16px; }
.in { padding-left: 31px; }
.opt { display: grid; grid-template-columns: 15px 191.500px auto; padding-left: 16px; }
.c, .y { align-self: center; height: 14px; line-height: 14px; }
.c { background: #0ff; }
.y { background: #ff0; }
.foot { width: 407px; height: 30px; margin: 34px 0 0 65px; border-top: 2px solid #666; text-align: right; padding-right: 12px; font: 700 11.500px/21px "Noto Serif", "DejaVu Serif Condensed", "DejaVu Serif", serif; letter-spacing: -.12px; }

.pager {
  position: absolute; left: 593px; top: 588px; width: 180px; height: 29px; border-radius: 2px;
  background: rgba(0, 0, 0, .75); color: #fff; display: grid; grid-template-columns: 35px 18px 15px 20px 84px;
  align-items: center; padding-left: 8px; font: 700 8.800px Roboto, sans-serif; overflow: hidden;
}
.zoomers { width: 84px; height: 29px; display: flex; align-items: center; gap: 16px; }
.zoomers::before { content: ""; width: 1px; height: 29px; background: #777; margin: 0 -6px 0 0; }

/* taskbar */
.task { height: 40px; flex: none; background: #292929; display: flex; justify-content: space-between; color: #fff; }
.pins { display: flex; }
.pins > div { width: 49px; height: 40px; display: grid; place-items: center; position: relative; }
.pins svg { width: 24px; height: 24px; }
.run::after { content: ""; position: absolute; left: 4px; right: 5px; bottom: 0; height: 2px; background: #ffb1ae; }
.r2::after { background: linear-gradient(90deg, #ffb1ae 32px, #b77f7d 32px); }
.pins .now::before { content: ""; position: absolute; left: 1px; right: 0; top: 0; bottom: 0; background: linear-gradient(90deg, #555 44px, #444 44px); }
.now svg { position: relative; }
.now::after { left: 1px; right: 0; background: linear-gradient(90deg, #ffb1ae 44px, #b77f7d 44px); }
.tray { display: flex; align-items: center; padding-right: 4px; }
.tray > svg { margin-right: 9px; }
.tray > svg:nth-child(3) { margin-right: 8px; }
.tray > svg:nth-child(4) { margin-right: 6px; }
.tray > svg:nth-child(5) { margin-right: 10px; }
.lang { width: 40px; font-size: 11.700px; letter-spacing: -.2px; }
.clock { width: 47px; text-align: center; line-height: 18px; font-size: 11.500px; letter-spacing: -.35px; white-space: nowrap; }
.tray .clock + svg { margin: 0 20px 0 21px; }
.edge { width: 1px; height: 40px; background: #888; }
```
